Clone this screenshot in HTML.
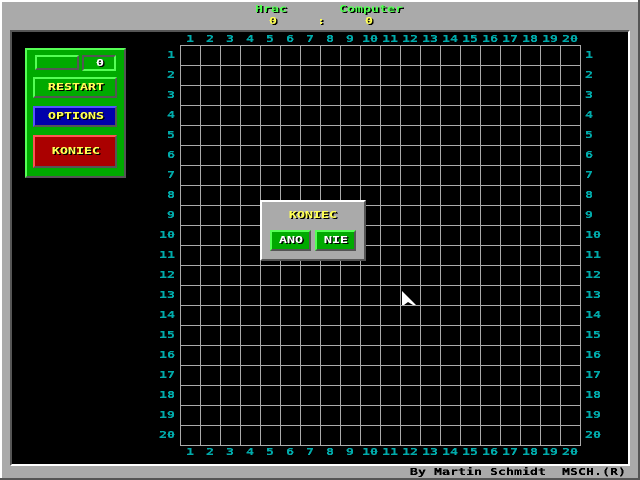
<!DOCTYPE html>
<html><head><meta charset="utf-8"><style>
html,body{margin:0;padding:0;width:640px;height:480px;overflow:hidden;background:#fff}
div{position:absolute;box-sizing:border-box}
#bg{left:2px;top:2px;width:636px;height:476px;background:#aaa}
#bot{left:0;top:478px;width:640px;height:2px;background:#555}
#rgt{left:638px;top:0;width:2px;height:480px;background:#555}
#panel{left:10px;top:30px;width:620px;height:436px;background:#000;border:2px solid;border-color:#555 #fff #fff #555}
#grid{left:180px;top:45px;width:401px;height:401px;background-image:linear-gradient(#aaa 1px,transparent 1px),linear-gradient(90deg,#aaa 1px,transparent 1px);background-size:20px 20px}
.b{border:2px solid;border-color:#5f5 #555 #555 #5f5;background:#0a0}
.s{border:2px solid;border-color:#555 #5f5 #5f5 #555;background:#0a0}
#txt{left:0;top:1px;width:640px;height:479px;filter:url(#th)}
#txt div{font:bold 10px/8px "DejaVu Sans Mono",monospace;white-space:pre;transform:scaleX(1.329);transform-origin:0 0;height:8px}
#txt .c{left:0;top:0;width:640px;height:479px;transform:none}
.c div{color:#0aa}
.y{color:#ff5;text-shadow:1px 1px 0 #000}
.w{color:#fff;text-shadow:1px 1px 0 #000}
.g{color:#5f5;text-shadow:1px 1px 0 #000}
.k{color:#000}
</style></head><body>
<div id="bg"></div><div id="bot"></div><div id="rgt"></div>
<div id="panel"></div>
<div id="grid"></div>
<div class="b" style="left:25px;top:48px;width:101px;height:130px"></div>
<div class="b" style="left:35px;top:55px;width:44px;height:15px"></div>
<div class="s" style="left:82px;top:55px;width:34px;height:16px"></div>
<div class="b" style="left:33px;top:77px;width:84px;height:21px"></div>
<div class="b" style="left:33px;top:106px;width:84px;height:21px;border-color:#55f #555 #555 #55f;background:#00a"></div>
<div class="b" style="left:33px;top:135px;width:84px;height:33px;border-color:#f55 #555 #555 #f55;background:#a00"></div>
<div style="left:260px;top:200px;width:106px;height:61px;background:#aaa;border:2px solid;border-color:#fff #555 #555 #fff"></div>
<div class="b" style="left:270px;top:230px;width:41px;height:21px"></div>
<div class="b" style="left:315px;top:230px;width:41px;height:21px"></div>
<svg style="position:absolute;left:0;top:0" width="640" height="480"><polygon points="402,291 416,305 413,305 408,302 404,305 402,305" fill="#fff"/></svg>
<svg width="0" height="0" style="position:absolute"><filter id="th" x="0" y="0" width="100%" height="100%" color-interpolation-filters="sRGB"><feComponentTransfer><feFuncA type="discrete" tableValues="0 1 1"/></feComponentTransfer></filter></svg>
<div id="txt">
<div class="g" style="left:255px;top:5px">Hrac</div>
<div class="g" style="left:339px;top:5px">Computer</div>
<div class="y" style="left:269px;top:17px">0</div>
<div class="y" style="left:317px;top:17px">:</div>
<div class="y" style="left:365px;top:17px">0</div>
<div class="w" style="left:96px;top:59px">0</div>
<div class="y" style="left:48px;top:83px">RESTART</div>
<div class="y" style="left:48px;top:112px">OPTIONS</div>
<div class="y" style="left:52px;top:147px">KONIEC</div>
<div class="y" style="left:289px;top:211px">KONIEC</div>
<div class="w" style="left:279px;top:236px">ANO</div>
<div class="w" style="left:324px;top:236px">NIE</div>
<div class="k" style="left:410px;top:468px">By Martin Schmidt  MSCH.(R)</div>
<div class="c">
<div style="left:186px;top:35px">1</div><div style="left:206px;top:35px">2</div><div style="left:226px;top:35px">3</div><div style="left:246px;top:35px">4</div><div style="left:266px;top:35px">5</div><div style="left:286px;top:35px">6</div><div style="left:306px;top:35px">7</div><div style="left:326px;top:35px">8</div><div style="left:346px;top:35px">9</div><div style="left:362px;top:35px">10</div><div style="left:382px;top:35px">11</div><div style="left:402px;top:35px">12</div><div style="left:422px;top:35px">13</div><div style="left:442px;top:35px">14</div><div style="left:462px;top:35px">15</div><div style="left:482px;top:35px">16</div><div style="left:502px;top:35px">17</div><div style="left:522px;top:35px">18</div><div style="left:542px;top:35px">19</div><div style="left:562px;top:35px">20</div>
<div style="left:186px;top:448px">1</div><div style="left:206px;top:448px">2</div><div style="left:226px;top:448px">3</div><div style="left:246px;top:448px">4</div><div style="left:266px;top:448px">5</div><div style="left:286px;top:448px">6</div><div style="left:306px;top:448px">7</div><div style="left:326px;top:448px">8</div><div style="left:346px;top:448px">9</div><div style="left:362px;top:448px">10</div><div style="left:382px;top:448px">11</div><div style="left:402px;top:448px">12</div><div style="left:422px;top:448px">13</div><div style="left:442px;top:448px">14</div><div style="left:462px;top:448px">15</div><div style="left:482px;top:448px">16</div><div style="left:502px;top:448px">17</div><div style="left:522px;top:448px">18</div><div style="left:542px;top:448px">19</div><div style="left:562px;top:448px">20</div>
<div style="left:167px;top:51px">1</div><div style="left:167px;top:71px">2</div><div style="left:167px;top:91px">3</div><div style="left:167px;top:111px">4</div><div style="left:167px;top:131px">5</div><div style="left:167px;top:151px">6</div><div style="left:167px;top:171px">7</div><div style="left:167px;top:191px">8</div><div style="left:167px;top:211px">9</div><div style="left:159px;top:231px">10</div><div style="left:159px;top:251px">11</div><div style="left:159px;top:271px">12</div><div style="left:159px;top:291px">13</div><div style="left:159px;top:311px">14</div><div style="left:159px;top:331px">15</div><div style="left:159px;top:351px">16</div><div style="left:159px;top:371px">17</div><div style="left:159px;top:391px">18</div><div style="left:159px;top:411px">19</div><div style="left:159px;top:431px">20</div>
<div style="left:585px;top:51px">1</div><div style="left:585px;top:71px">2</div><div style="left:585px;top:91px">3</div><div style="left:585px;top:111px">4</div><div style="left:585px;top:131px">5</div><div style="left:585px;top:151px">6</div><div style="left:585px;top:171px">7</div><div style="left:585px;top:191px">8</div><div style="left:585px;top:211px">9</div><div style="left:585px;top:231px">10</div><div style="left:585px;top:251px">11</div><div style="left:585px;top:271px">12</div><div style="left:585px;top:291px">13</div><div style="left:585px;top:311px">14</div><div style="left:585px;top:331px">15</div><div style="left:585px;top:351px">16</div><div style="left:585px;top:371px">17</div><div style="left:585px;top:391px">18</div><div style="left:585px;top:411px">19</div><div style="left:585px;top:431px">20</div>
</div>
</div>
</body></html>
